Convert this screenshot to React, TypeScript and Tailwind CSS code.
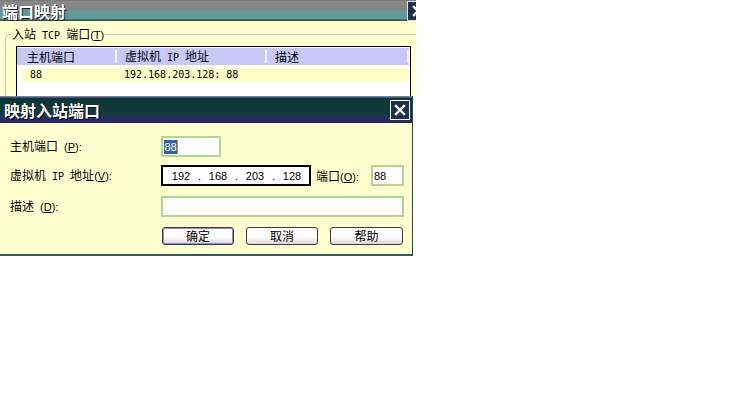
import React from "react";

const CJK = "font-['Noto_Sans_CJK_SC',sans-serif] text-[12px]";
const LAT = "font-['DejaVu_Sans_Mono',monospace] text-[10px] whitespace-pre";
const NUM = "font-['Liberation_Sans',sans-serif] text-[11px]";

function Mixed({ text }: { text: string }) {
  const parts = text.split(/([\u3400-\u9fff]+)/).filter(Boolean);
  return (
    <>
      {parts.map((p, i) =>
        /[\u3400-\u9fff]/.test(p) ? (
          <span key={i} className={CJK}>
            {p}
          </span>
        ) : (
          <span key={i} className={LAT}>
            {p}
          </span>
        )
      )}
    </>
  );
}

function Mn({ c, suffix = "" }: { c: string; suffix?: string }) {
  return (
    <span className={`${NUM} whitespace-pre`}>
      (<span className="underline">{c}</span>){suffix}
    </span>
  );
}

function CloseX({ size = 12 }: { size?: number }) {
  return (
    <svg width={size} height={size} viewBox="0 0 12 12">
      <path d="M2 2 L10 10 M10 2 L2 10" stroke="white" strokeWidth="2.4" strokeLinecap="square" />
    </svg>
  );
}

function Btn({ label, focus = false, w = "w-[72px]" }: { label: string; focus?: boolean; w?: string }) {
  return (
    <div
      className={`${w} h-[18px] rounded-[3px] border border-[#3c3c3c] flex items-center justify-center bg-[linear-gradient(to_bottom,#ffffff_0%,#fafafa_60%,#d8d8d8_100%)] ${
        focus ? "shadow-[inset_0_0_0_1px_#8c8cd0]" : ""
      }`}
    >
      <span className={`${CJK} leading-[14px] text-black`}>{label}</span>
    </div>
  );
}

export default function App() {
  return (
    <div className="w-[754px] h-[395px] bg-white overflow-hidden">
      <div className="w-[416px] flex flex-col">
        {/* Background window */}
        <div className="h-[96px] overflow-hidden bg-[#ffffd0] flex flex-col">
          <div className="h-[21px] shrink-0 flex items-center overflow-hidden bg-[linear-gradient(to_bottom,#6c6c6c_0px,#888888_1px,#848484_10px,#5e9a9a_11px,#5e9a9a_19px,#2f4f4f_20px,#2f4f4f_21px)]">
            <span className="pl-[2px] text-white font-bold text-[16px] leading-[16px] font-['Noto_Sans_CJK_SC',sans-serif] [text-shadow:1px_1px_0_#1a1a1a]">
              端口映射
            </span>
            <div className="ml-auto mr-[-12px] w-[21px] h-[20px] shrink-0 bg-[#22304e] border border-[#e0e0e0] flex items-center justify-center">
              <CloseX />
            </div>
          </div>
          <div className="pt-[5px]">
            <fieldset className="ml-[5px] w-[420px] h-[200px] border-t border-l border-[#c4c4c4] rounded-tl-[5px] pl-[5px]">
              <legend className="px-[1px] leading-[14px] text-black">
                <Mixed text="入站 TCP 端口" />
                <Mn c="T" />
              </legend>
              <div className="mt-[3px] ml-[5px] w-[395px] h-[100px] border border-black bg-white pt-[1px] flex flex-col">
                <div className="h-[17px] w-[392px] bg-[#c8c8f6] flex items-center leading-[14px]">
                  <div className="w-[100px] h-full flex items-center">
                    <span className="pl-[10px] flex-1">
                      <Mixed text="主机端口" />
                    </span>
                    <span className="w-[2px] h-[13px] bg-[#eeeeff]" />
                  </div>
                  <div className="w-[150px] h-full flex items-center">
                    <span className="pl-[8px] flex-1">
                      <Mixed text="虚拟机 IP 地址" />
                    </span>
                    <span className="w-[2px] h-[13px] bg-[#eeeeff]" />
                  </div>
                  <div className="flex-1 h-full flex items-center">
                    <span className="pl-[8px] flex-1">
                      <Mixed text="描述" />
                    </span>
                    <span className="w-[2px] h-[13px] bg-[#eeeeff]" />
                  </div>
                </div>
                <div className="mt-[3px] ml-[5px] w-[387px] h-[14px] bg-[#ffffc8] flex items-center leading-[14px]">
                  <span className={`${LAT} w-[102px] pl-[8px]`}>88</span>
                  <span className={LAT}>192.168.203.128: 88</span>
                </div>
              </div>
            </fieldset>
          </div>
        </div>

        {/* Dialog */}
        <div className="w-[413px] flex flex-col border-r border-[#234848]">
          <div className="h-[27px] flex items-center bg-[linear-gradient(to_bottom,#7c7ca8_0px,#7c7ca8_1px,#0c3636_2px,#113b3b_19px,#2a2a66_21px,#2a2a66_26px,#1a1a4a_27px)]">
            <span className="pl-[4px] text-white font-bold text-[16px] leading-[16px] font-['Noto_Sans_CJK_SC',sans-serif] [text-shadow:1px_1px_0_#000]">
              映射入站端口
            </span>
            <div className="ml-auto mr-[2px] w-[20px] h-[20px] bg-[#1e3050] border border-white flex items-center justify-center">
              <CloseX />
            </div>
          </div>
          <div className="bg-[#ffffd0] pt-[13px] pb-[9px] border-b-2 border-[#2f5c5c] flex flex-col text-black leading-[14px]">
            <div className="h-[21px] flex items-center pl-[10px]">
              <div className="w-[151px]">
                <Mixed text="主机端口 " />
                <Mn c="P" suffix=":" />
              </div>
              <div className="w-[60px] h-[21px] border-2 border-[#acd98e] bg-white flex items-center pl-[1px]">
                <span className={`${NUM} bg-[#3163a5] text-white leading-[14px] px-[0.5px]`}>88</span>
                <span className="w-[1px] h-[14px] bg-[#d08030]" />
              </div>
            </div>
            <div className="mt-[8px] h-[21px] flex items-center pl-[10px]">
              <div className="w-[151px]">
                <Mixed text="虚拟机 IP 地址" />
                <Mn c="V" suffix=":" />
              </div>
              <div className="w-[150px] h-[21px] border-2 border-black bg-white flex items-center pl-[4px]">
                <span className={`${NUM} w-[28px] text-center`}>192</span>
                <span className={`${NUM} w-[9px] text-center`}>.</span>
                <span className={`${NUM} w-[28px] text-center`}>168</span>
                <span className={`${NUM} w-[9px] text-center`}>.</span>
                <span className={`${NUM} w-[28px] text-center`}>203</span>
                <span className={`${NUM} w-[9px] text-center`}>.</span>
                <span className={`${NUM} w-[28px] text-center`}>128</span>
              </div>
              <div className="w-[60px] pl-[5px]">
                <Mixed text="端口" />
                <Mn c="O" suffix=":" />
              </div>
              <div className="w-[33px] h-[21px] border-2 border-[#acd98e] bg-white flex items-center pl-[1px]">
                <span className={NUM}>88</span>
              </div>
            </div>
            <div className="mt-[10px] h-[21px] flex items-center pl-[10px]">
              <div className="w-[151px]">
                <Mixed text="描述 " />
                <Mn c="D" suffix=":" />
              </div>
              <div className="w-[243px] h-[21px] border-2 border-[#acd98e] bg-white" />
            </div>
            <div className="mt-[10px] flex items-center pl-[162px] gap-[12px]">
              <Btn label="确定" focus />
              <Btn label="取消" />
              <Btn label="帮助" w="w-[73px]" />
            </div>
          </div>
        </div>
      </div>
    </div>
  );
}
